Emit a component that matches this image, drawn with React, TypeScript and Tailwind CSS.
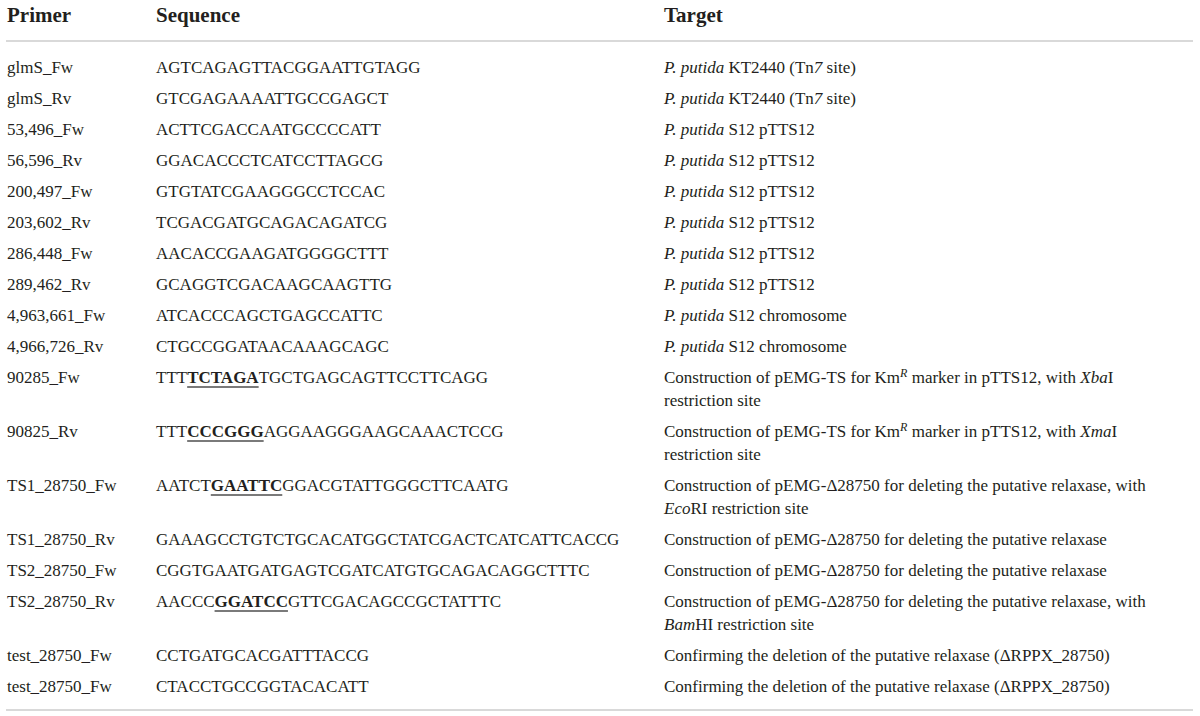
import React from "react";

type Row = {
  primer: string;
  seq: React.ReactNode;
  target: React.ReactNode;
};

function Site({ children }: { children: React.ReactNode }) {
  return (
    <span className="font-bold underline decoration-2 decoration-[#7a7a7a] underline-offset-[3px]">
      {children}
    </span>
  );
}

const pputida = (rest: React.ReactNode) => (
  <>
    <i>P. putida</i> {rest}
  </>
);

const rows: Row[] = [
  { primer: "glmS_Fw", seq: "AGTCAGAGTTACGGAATTGTAGG", target: pputida(<>KT2440 (Tn<i>7</i> site)</>) },
  { primer: "glmS_Rv", seq: "GTCGAGAAAATTGCCGAGCT", target: pputida(<>KT2440 (Tn<i>7</i> site)</>) },
  { primer: "53,496_Fw", seq: "ACTTCGACCAATGCCCCATT", target: pputida("S12 pTTS12") },
  { primer: "56,596_Rv", seq: "GGACACCCTCATCCTTAGCG", target: pputida("S12 pTTS12") },
  { primer: "200,497_Fw", seq: "GTGTATCGAAGGGCCTCCAC", target: pputida("S12 pTTS12") },
  { primer: "203,602_Rv", seq: "TCGACGATGCAGACAGATCG", target: pputida("S12 pTTS12") },
  { primer: "286,448_Fw", seq: "AACACCGAAGATGGGGCTTT", target: pputida("S12 pTTS12") },
  { primer: "289,462_Rv", seq: "GCAGGTCGACAAGCAAGTTG", target: pputida("S12 pTTS12") },
  { primer: "4,963,661_Fw", seq: "ATCACCCAGCTGAGCCATTC", target: pputida("S12 chromosome") },
  { primer: "4,966,726_Rv", seq: "CTGCCGGATAACAAAGCAGC", target: pputida("S12 chromosome") },
  {
    primer: "90285_Fw",
    seq: (
      <>
        TTT<Site>TCTAGA</Site>TGCTGAGCAGTTCCTTCAGG
      </>
    ),
    target: (
      <>
        Construction of pEMG-TS for Km<sup className="italic text-[12px]">R</sup> marker in pTTS12, with <i>Xba</i>I
        <br />
        restriction site
      </>
    ),
  },
  {
    primer: "90825_Rv",
    seq: (
      <>
        TTT<Site>CCCGGG</Site>AGGAAGGGAAGCAAACTCCG
      </>
    ),
    target: (
      <>
        Construction of pEMG-TS for Km<sup className="italic text-[12px]">R</sup> marker in pTTS12, with <i>Xma</i>I
        <br />
        restriction site
      </>
    ),
  },
  {
    primer: "TS1_28750_Fw",
    seq: (
      <>
        AATCT<Site>GAATTC</Site>GGACGTATTGGGCTTCAATG
      </>
    ),
    target: (
      <>
        Construction of pEMG-Δ28750 for deleting the putative relaxase, with
        <br />
        <i>Eco</i>RI restriction site
      </>
    ),
  },
  {
    primer: "TS1_28750_Rv",
    seq: "GAAAGCCTGTCTGCACATGGCTATCGACTCATCATTCACCG",
    target: "Construction of pEMG-Δ28750 for deleting the putative relaxase",
  },
  {
    primer: "TS2_28750_Fw",
    seq: "CGGTGAATGATGAGTCGATCATGTGCAGACAGGCTTTC",
    target: "Construction of pEMG-Δ28750 for deleting the putative relaxase",
  },
  {
    primer: "TS2_28750_Rv",
    seq: (
      <>
        AACCC<Site>GGATCC</Site>GTTCGACAGCCGCTATTTC
      </>
    ),
    target: (
      <>
        Construction of pEMG-Δ28750 for deleting the putative relaxase, with
        <br />
        <i>Bam</i>HI restriction site
      </>
    ),
  },
  {
    primer: "test_28750_Fw",
    seq: "CCTGATGCACGATTTACCG",
    target: "Confirming the deletion of the putative relaxase (ΔRPPX_28750)",
  },
  {
    primer: "test_28750_Fw",
    seq: "CTACCTGCCGGTACACATT",
    target: "Confirming the deletion of the putative relaxase (ΔRPPX_28750)",
  },
];

export default function App() {
  return (
    <div className="w-[1200px] h-[716px] bg-white px-[6px] font-['Liberation_Serif',serif] text-[#231f20] overflow-hidden">
      <div className="w-[1187px]">
        {/* header */}
        <div className="grid grid-cols-[149px_508px_1fr] h-[40px] pt-[2px] pl-px text-[21px] leading-[27px] font-bold">
          <div>Primer</div>
          <div>Sequence</div>
          <div>Target</div>
        </div>
        <div className="h-[2px] bg-[#d9d9d9]" />

        {/* body */}
        <div className="pt-[10px] pb-[7px] text-[17px] leading-[23px]">
          {rows.map((r, i) => (
            <div key={i} className="grid grid-cols-[149px_508px_1fr] py-[4px] pl-px">
              <div className="whitespace-nowrap">{r.primer}</div>
              <div className="whitespace-nowrap">{r.seq}</div>
              <div className="whitespace-nowrap">{r.target}</div>
            </div>
          ))}
        </div>
        <div className="h-[2px] bg-[#d9d9d9]" />
      </div>
    </div>
  );
}
